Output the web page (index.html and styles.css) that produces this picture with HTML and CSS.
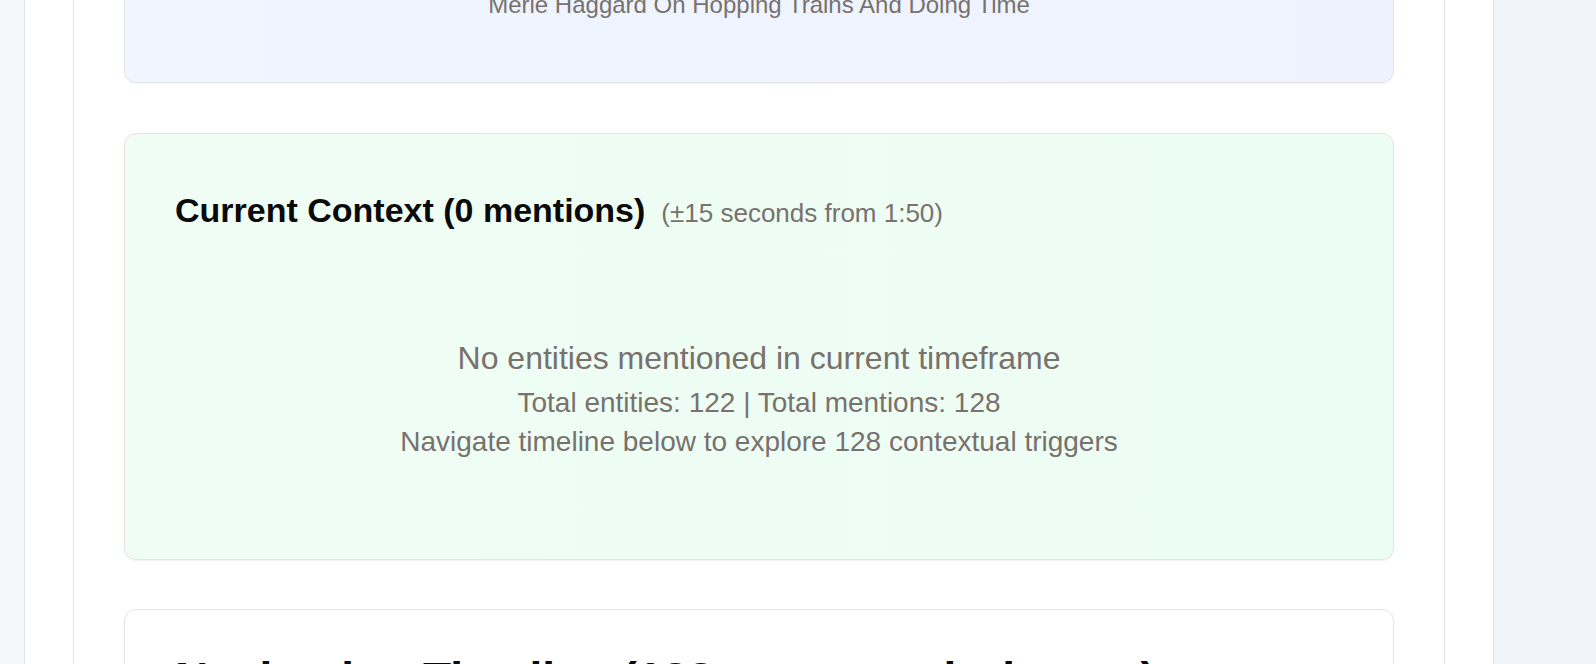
FILE: index.html
```html
<!DOCTYPE html>
<html lang="en">
<head>
<meta charset="utf-8">
<title>Current Context</title>
<link rel="stylesheet" href="styles.css">
</head>
<body>
<div class="page">
  <div class="outer">
    <div class="inner">
      <section class="panel panel-blue">
        <p class="track-meta">Merle Haggard On Hopping Trains And Doing Time</p>
      </section>

      <section class="panel panel-green">
        <div class="panel-head">
          <h3 class="panel-title">Current Context (0 mentions)</h3>
          <span class="panel-sub">(±15 seconds from 1:50)</span>
        </div>
        <div class="empty">
          <p class="empty-main">No entities mentioned in current timeframe</p>
          <p class="empty-line">Total entities: 122 | Total mentions: 128</p>
          <p class="empty-line">Navigate timeline below to explore 128 contextual triggers</p>
        </div>
      </section>

      <section class="panel panel-white">
        <h2 class="timeline-title">Navigation Timeline (128 contextual triggers)</h2>
      </section>
    </div>
  </div>
</div>
</body>
</html>
```

FILE: styles.css
```css
* { box-sizing: border-box; }

html, body {
  margin: 0;
  padding: 0;
  height: 100%;
  overflow: hidden;
}

body {
  font-family: "Liberation Sans", Arial, Helvetica, sans-serif;
  background: linear-gradient(to right, #f6f7f9, #f0f3f8);
}

.page {
  display: flex;
  padding-left: 24px;
  margin-top: -164px;
}

.outer {
  width: 1470px;
  background: #ffffff;
  border: 1px solid #e7e5e4;
  padding: 48px;
  min-height: 1200px;
}

.inner {
  border: 1px solid #e7e5e4;
  padding: 50px 50px;
  display: flex;
  flex-direction: column;
  min-height: 1100px;
}

.panel {
  border: 1px solid #e7e5e4;
  border-radius: 12px;
  box-shadow: 0 1px 2px rgba(0, 0, 0, 0.05);
}

.panel-blue {
  background: linear-gradient(to right, #eff6ff, #eef2ff);
  padding: 50px 50px 59px;
  margin-bottom: 50px;
  text-align: center;
}

.track-meta {
  margin: 0;
  font-size: 24px;
  line-height: 36px;
  color: #78716c;
}

.panel-green {
  background: linear-gradient(to right, #f0fdf4, #ecfdf5);
  padding: 55px 50px 50px;
  margin-bottom: 49px;
}

.panel-head {
  display: flex;
  align-items: baseline;
  gap: 16px;
  margin-bottom: 57px;
}

.panel-title {
  margin: 0;
  font-size: 34px;
  line-height: 42px;
  font-weight: 700;
  color: #0a0a0a;
}

.panel-sub {
  font-size: 26px;
  color: #78716c;
}

.empty {
  padding: 48px 0;
  text-align: center;
  color: #78716c;
}

.empty-main {
  margin: 0 0 2px;
  font-size: 32px;
  line-height: 45px;
}

.empty-line {
  margin: 0;
  font-size: 28px;
  line-height: 39px;
}

.panel-white {
  background: #ffffff;
  padding: 42px 50px 50px;
  min-height: 300px;
}

.timeline-title {
  margin: 0;
  font-size: 46px;
  line-height: 55px;
  font-weight: 700;
  color: #0a0a0a;
}
```
